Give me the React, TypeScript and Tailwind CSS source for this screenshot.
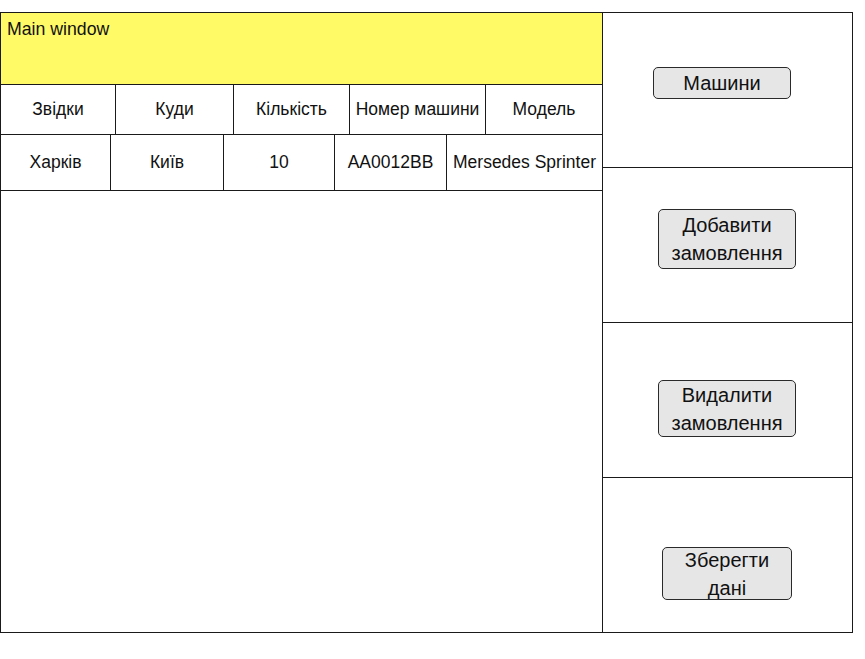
const headers = [
  { label: "Звідки", width: "w-[115px]" },
  { label: "Куди", width: "w-[118px]" },
  { label: "Кількість", width: "w-[116px]" },
  { label: "Номер машини", width: "w-[136px]" },
  { label: "Модель", width: "flex-1" },
];

const cells = [
  { label: "Харків", width: "w-[110px]" },
  { label: "Київ", width: "w-[113px]" },
  { label: "10", width: "w-[111px]" },
  { label: "AA0012BB", width: "w-[112px]" },
  { label: "Mersedes Sprinter", width: "flex-1" },
];

function ActionButton({ lines, className }: { lines: string[]; className: string }) {
  return (
    <button
      type="button"
      className={`flex flex-col items-center justify-center rounded-[5px] border border-[#2a2a2a] bg-[#e6e6e6] text-[20px] leading-[28px] text-[#111] ${className}`}
    >
      {lines.map((line) => (
        <span key={line}>{line}</span>
      ))}
    </button>
  );
}

export default function App() {
  return (
    <div className="h-[659px] w-[865px] bg-white pt-[12px] font-['Liberation_Sans',Arial,sans-serif] text-[#111]">
      <div className="flex h-[621px] w-[853px] border border-[#1a1a1a]">
        {/* orders table */}
        <div className="flex w-[601px] flex-col">
          <div className="h-[72px] border-b border-[#1a1a1a] bg-[#fffa66] px-[6px] pt-[5px] text-[17.7px] leading-[22px]">
            Main window
          </div>
          <div className="flex h-[50px] border-b border-[#1a1a1a] text-[17.5px]">
            {headers.map((h, i) => (
              <div
                key={h.label}
                className={`flex items-center justify-center whitespace-nowrap ${h.width} ${i < headers.length - 1 ? "border-r border-[#1a1a1a]" : ""}`}
              >
                {h.label}
              </div>
            ))}
          </div>
          <div className="flex h-[56px] border-b border-[#1a1a1a] text-[17.5px]">
            {cells.map((c, i) => (
              <div
                key={c.label}
                className={`flex items-center justify-center whitespace-nowrap ${c.width} ${i < cells.length - 1 ? "border-r border-[#1a1a1a]" : ""}`}
              >
                {c.label}
              </div>
            ))}
          </div>
        </div>

        {/* actions */}
        <div className="flex flex-1 flex-col border-l border-[#1a1a1a]">
          <div className="h-[155px] border-b border-[#1a1a1a] pl-[50px] pt-[54px]">
            <ActionButton lines={["Машини"]} className="h-[32px] w-[138px]" />
          </div>
          <div className="h-[155px] border-b border-[#1a1a1a] pl-[55px] pt-[41px]">
            <ActionButton lines={["Добавити", "замовлення"]} className="h-[60px] w-[138px]" />
          </div>
          <div className="h-[155px] border-b border-[#1a1a1a] pl-[55px] pt-[57px]">
            <ActionButton lines={["Видалити", "замовлення"]} className="h-[57px] w-[138px]" />
          </div>
          <div className="flex-1 pl-[59px] pt-[69px]">
            <ActionButton lines={["Зберегти", "дані"]} className="h-[53px] w-[130px]" />
          </div>
        </div>
      </div>
    </div>
  );
}
